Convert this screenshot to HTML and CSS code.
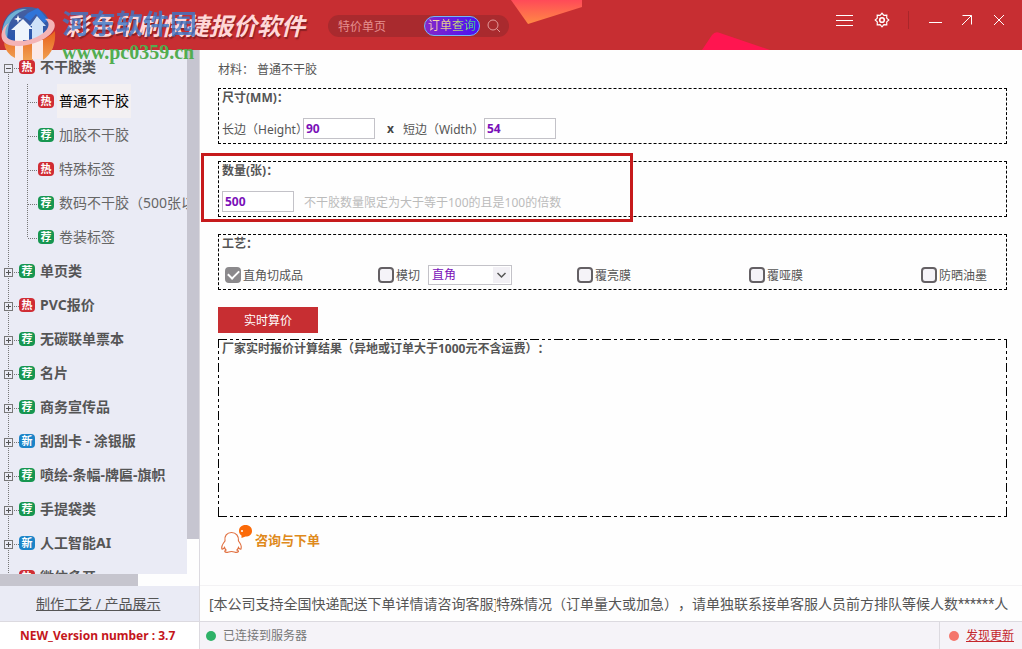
FILE: index.html
```html
<!DOCTYPE html>
<html lang="zh-CN">
<head>
  <meta charset="UTF-8">
  <meta name="viewport" content="width=device-width, initial-scale=1.0">
  <title>彩色印刷快捷报价软件</title>
  <link rel="stylesheet" href="styles.css">
</head>
<body>
  <header class="topbar">
    <svg class="shape shape-orange" width="71" height="24" viewBox="0 0 71 24" aria-hidden="true">
      <defs>
        <linearGradient id="orange" x1="0" y1="0" x2="0" y2="1">
          <stop offset="0" stop-color="#ff4a58"/>
          <stop offset="1" stop-color="#ff8a45"/>
        </linearGradient>
      </defs>
      <path d="M0 0H71V7L17 24Z" fill="url(#orange)"/>
    </svg>
    <svg class="shape shape-pink" width="68" height="18" viewBox="0 0 68 18" aria-hidden="true">
      <path d="M0 18L10 3Q13 -1 18 1L68 18Z" fill="#ff1550"/>
    </svg>

    <h1 class="title">彩色印刷快捷报价软件</h1>

    <form class="search">
      <input class="search-input" type="text" aria-label="搜索" placeholder="特价单页">
      <button class="order-btn" type="button"><span>订单查询</span></button>
      <button class="search-btn" type="submit" aria-label="搜索">
        <svg width="14" height="14" viewBox="0 0 14 14" fill="none" stroke="#e39a9a"><circle cx="6" cy="6" r="5"/><path d="M9.500 9.500L13 13"/></svg>
      </button>
    </form>

    <div class="window-tools">
      <button type="button" aria-label="菜单">
        <svg width="18" height="18" viewBox="0 0 18 18" stroke="#fff"><path d="M0 4.500H17M0 9.500H17M0 14.500H17"/></svg>
      </button>
      <button type="button" aria-label="设置">
        <svg width="16" height="16" viewBox="0 0 16 16" fill="none" stroke="#fff" stroke-width="1.200"><path d="M8 1.200L9.900 3.300L12.800 3.200L12.700 6.100L14.800 8L12.700 9.900L12.800 12.800L9.900 12.700L8 14.800L6.100 12.700L3.200 12.800L3.300 9.900L1.200 8L3.300 6.100L3.200 3.200L6.100 3.300Z"/><circle cx="8" cy="8" r="2.300" stroke-width="1.600"/></svg>
      </button>
      <span class="divider"></span>
      <button class="minimize" type="button" aria-label="最小化">
        <svg width="14" height="16" viewBox="0 0 14 16" stroke="#fff"><path d="M0 10.500H13"/></svg>
      </button>
      <button type="button" aria-label="最大化">
        <svg width="12" height="16" viewBox="0 0 12 16" fill="none" stroke="#fff"><path d="M1.500 3.500H10.500V12.500M10.500 3.500L1 13"/></svg>
      </button>
      <button type="button" aria-label="关闭">
        <svg width="12" height="16" viewBox="0 0 12 16" stroke="#fff"><path d="M1 3L11 13M11 3L1 13"/></svg>
      </button>
    </div>
  </header>

  <div class="middle">
    <aside class="sidebar">
      <div class="tree-area">
        <nav class="tree-view">
          <ul class="tree">
            <li>
              <div class="node"><span class="toggle open"></span><span class="badge hot">热</span><b>不干胶类</b></div>
              <ul class="children">
                <li class="node"><span class="badge hot">热</span><a class="selected" href="#">普通不干胶</a></li>
                <li class="node"><span class="badge rec">荐</span><a href="#">加胶不干胶</a></li>
                <li class="node"><span class="badge hot">热</span><a href="#">特殊标签</a></li>
                <li class="node"><span class="badge rec">荐</span><a href="#">数码不干胶（500张以</a></li>
                <li class="node"><span class="badge rec">荐</span><a href="#">卷装标签</a></li>
              </ul>
            </li>
            <li class="node"><span class="toggle"></span><span class="badge rec">荐</span><b>单页类</b></li>
            <li class="node"><span class="toggle"></span><span class="badge hot">热</span><b>PVC报价</b></li>
            <li class="node"><span class="toggle"></span><span class="badge rec">荐</span><b>无碳联单票本</b></li>
            <li class="node"><span class="toggle"></span><span class="badge rec">荐</span><b>名片</b></li>
            <li class="node"><span class="toggle"></span><span class="badge rec">荐</span><b>商务宣传品</b></li>
            <li class="node"><span class="toggle"></span><span class="badge new">新</span><b>刮刮卡 - 涂银版</b></li>
            <li class="node"><span class="toggle"></span><span class="badge rec">荐</span><b>喷绘-条幅-牌匾-旗帜</b></li>
            <li class="node"><span class="toggle"></span><span class="badge rec">荐</span><b>手提袋类</b></li>
            <li class="node"><span class="toggle"></span><span class="badge new">新</span><b>人工智能AI</b></li>
            <li class="node"><span class="toggle"></span><span class="badge hot">热</span><b>微信多开</b></li>
          </ul>
        </nav>
        <div class="scroll-v"></div>
        <div class="scroll-h"></div>
      </div>
      <div class="show-link"><a href="#">制作工艺 / 产品展示</a></div>
    </aside>

    <main class="main">
      <div class="content">
        <p class="material">材料： 普通不干胶</p>

        <section class="group">
          <h2>尺寸(MM)：</h2>
          <div class="row">
            <label class="size-label" for="height">长边（Height）</label>
            <input class="num" type="text" id="height" value="90">
            <b class="times">x</b>
            <label class="size-label" for="width">短边（Width）</label>
            <input class="num" type="text" id="width" value="54">
          </div>
        </section>

        <section class="group marked">
          <h2><label for="amount">数量(张)：</label></h2>
          <div class="row">
            <input class="num" type="text" id="amount" value="500">
            <span class="hint">不干胶数量限定为大于等于100的且是100的倍数</span>
          </div>
        </section>

        <section class="group">
          <h2>工艺：</h2>
          <div class="row crafts">
            <label class="check"><input type="checkbox" checked>直角切成品</label>
            <div class="die-cut">
              <label class="check"><input type="checkbox">模切</label>
              <span class="select-box">
                <select aria-label="模切形状"><option>直角</option></select>
                <svg width="17" height="16" viewBox="0 0 17 16" aria-hidden="true"><path d="M4.500 6L8.500 10L12.500 6" fill="none" stroke="#555" stroke-width="1.500"/></svg>
              </span>
            </div>
            <label class="check"><input type="checkbox">覆亮膜</label>
            <label class="check"><input type="checkbox">覆哑膜</label>
            <label class="check"><input type="checkbox">防晒油墨</label>
          </div>
        </section>

        <button class="calc-btn" type="button">实时算价</button>

        <section class="result">
          <h2>厂家实时报价计算结果（异地或订单大于1000元不含运费）：</h2>
        </section>

        <a class="contact" href="#">
          <svg width="34" height="30" viewBox="0 0 34 30" aria-hidden="true">
            <path d="M5 16C4 11 7 7.500 11.500 7.500S19 11 18.500 16C20.500 18.500 22 21.500 21 24C20 24.500 19 23.500 18.500 22.500C18 24 17.500 24.500 17 25C19.500 26 18.500 27.500 15.500 27.300C13.500 27.200 12.500 26.500 11.500 26.500S9.500 27.200 7.500 27.300C4.500 27.500 4 26 6 25C5.500 24.500 5 24 4.500 22.500C4 23.500 2.500 24.500 2 24C1 21.500 3 18.500 5 16Z" fill="#fff" stroke="#e07040" stroke-width="1.200"/>
            <path d="M25.500 0C29.500 0 32 2.500 32 6S29.500 11.500 25.500 11.500L21.500 13L21.500 10.500C19.500 9 19 7.500 19 6C19 2.500 21.500 0 25.500 0Z" fill="#fb6a08"/>
            <circle cx="22" cy="6" r="1" fill="#fff"/>
          </svg>
          <b>咨询与下单</b>
        </a>
      </div>

      <div class="notice"><span class="notice-lead">[本公司支持全国快递配送下单详情请咨询客服]</span><span>特殊情况（订单量大或加急），请单独联系接单客服人员前方排队等候人数<span class="stars">******</span>人</span></div>
    </main>
  </div>

  <footer class="statusbar">
    <b class="version">NEW_Version number : 3.7</b>
    <span class="server"><i class="dot green"></i>已连接到服务器</span>
    <span class="update"><i class="dot red"></i><a href="#">发现更新</a></span>
  </footer>

  <div class="watermark" aria-hidden="true">
    <svg width="58" height="56" viewBox="0 0 58 56">
      <defs>
        <linearGradient id="ball" x1="0" y1="0" x2="0" y2="1">
          <stop offset="0" stop-color="#4a5f9c"/>
          <stop offset="1" stop-color="#2456b0"/>
        </linearGradient>
        <linearGradient id="flame" x1="0" y1="0" x2="0" y2="1">
          <stop offset="0" stop-color="#e8601c"/>
          <stop offset="1" stop-color="#f0a050"/>
        </linearGradient>
      </defs>
      <path d="M2 26C2 11 13 1 28 1C40 1 48 8 50 18C46 30 30 38 10 36C5 35 2 31 2 26Z" fill="url(#ball)"/>
      <path d="M2 28C3 12 13 2 27 3C15 7 9 14 8 24L7 33C4 32 2 30 2 28Z" fill="#6fb0d4"/>
      <path d="M4 37C18 43 44 37 55 25C56 38 52 48 43 54V34L33 37V54H23V38L15 38V52C9 49 5 44 4 37Z" fill="url(#flame)"/>
      <path d="M15 34H23V54H15ZM32 34H43V53H32Z" fill="#fbe9e6"/>
      <path d="M11 24L23 13L33 23H29V34H15V24Z" fill="#eef5fc"/>
      <path d="M28 7L38 2L48 14L44 17L36 8L30 15L24 11Z" fill="#2f74d8"/>
      <path d="M30 20L37 10L46 20H43V32L32 34V20Z" fill="#cfe2f8"/>
      <path d="M9 17C-1 24 -1 36 9 39C23 43 49 35 54 23C57 16 51 12 45 13C51 17 49 23 42 28C32 35 17 37 9 33C4 30 4 23 9 17Z" fill="#f4b4b6"/>
      <path d="M18 9L19 12L22 13L19 14L18 17L17 14L14 13L17 12Z" fill="#fff"/>
    </svg>
    <div>
      <p class="mark-name">河东软件园</p>
      <p class="mark-site">www.pc0359.cn</p>
    </div>
  </div>
</body>
</html>
```
FILE: styles.css
```css
*,
*::before,
*::after {
  box-sizing: border-box;
}

body {
  margin: 0;
  min-height: 100vh;
  display: flex;
  flex-direction: column;
  position: relative;
  font-family: "Noto Sans", "Noto Sans CJK SC", sans-serif;
  font-size: 12px;
  color: #555;
  background: #fefefe;
  text-spacing-trim: space-all;
}

h1, h2, p, ul {
  margin: 0;
  padding: 0;
}

ul {
  list-style: none;
}

button, input, select {
  font: inherit;
  margin: 0;
}

button {
  padding: 0;
  border: none;
  background: none;
  cursor: pointer;
}

svg {
  display: block;
}

/* top bar */
.topbar {
  height: 50px;
  flex: none;
  display: flex;
  align-items: center;
  position: relative;
  padding: 2px 17px 0 65px;
  background: #c72e32;
}

.shape {
  position: absolute;
}

.shape-orange {
  left: 511px;
  top: 0;
}

.shape-pink {
  left: 702px;
  bottom: 0;
}

.title {
  width: 263px;
  font-size: 24px;
  line-height: 30px;
  font-style: italic;
  white-space: nowrap;
  color: #ffd8d8;
  text-shadow: 1px 2px 1px #8c2024;
}

.search {
  width: 181px;
  height: 22px;
  display: flex;
  align-items: center;
  gap: 7px;
  padding: 0 8px 0 10px;
  border-radius: 11px;
  background: #a92a2e;
}

.search-input {
  flex: 1;
  min-width: 0;
  padding: 0;
  border: none;
  outline: none;
  background: none;
  color: #e58f8f;
}

.search-input::placeholder {
  color: #e58f8f;
}

.order-btn {
  width: 56px;
  height: 20px;
  border: 1px solid #70b8f8;
  border-radius: 10px;
  background: linear-gradient(90deg, #8528c8, #4a10f4);
  line-height: 18px;
}

.order-btn span {
  background: linear-gradient(90deg, #ffd0c8, #e8e070, #30d090);
  background-clip: text;
  color: transparent;
}

.window-tools {
  display: flex;
  align-items: center;
  gap: 20px;
  margin-left: auto;
  padding-bottom: 12px;
}

.window-tools button:nth-child(2) {
  margin-right: -2px;
}

.window-tools .minimize {
  margin-right: -2px;
}

.divider {
  width: 1px;
  height: 18px;
  background: #a9262a;
}

/* middle part */
.middle {
  flex: 1;
  display: flex;
  min-height: 0;
}

.sidebar {
  width: 200px;
  flex: none;
  display: flex;
  flex-direction: column;
  border-right: 1px solid #dcdae0;
}

.tree-area {
  flex: 1;
  display: grid;
  grid-template-columns: 1fr 12px;
  grid-template-rows: 1fr 12px;
}

.tree-view {
  height: calc(100vh - 125px);
  overflow: hidden;
  background: #eaebf5;
}

.scroll-v {
  background: linear-gradient(#c6c5d0, #c6c5d0) no-repeat 0 0 / 100% calc(100% - 35px);
}

.scroll-h {
  grid-column: 1 / 3;
  background: linear-gradient(#c6c5ce, #c6c5ce) no-repeat 0 0 / 138px 100%;
}

.tree {
  font-size: 14px;
  white-space: nowrap;
  background: repeating-linear-gradient(#777 0 1px, transparent 1px 2px) no-repeat 8px 18px / 1px 100%;
}

.node {
  height: 34px;
  display: flex;
  align-items: center;
  padding-left: 4px;
}

.toggle {
  width: 9px;
  height: 9px;
  flex: none;
  margin-top: 2px;
  border: 1px solid #777;
  background:
    linear-gradient(#555, #555) no-repeat center / 5px 1px,
    linear-gradient(#555, #555) no-repeat center / 1px 5px,
    #eaebf5;
}

.toggle.open {
  background: linear-gradient(#555, #555) no-repeat center / 5px 1px, #eaebf5;
}

/* dotted lead line in front of the badge */
.toggle + .badge::before,
.children .badge::before {
  content: "";
  position: absolute;
  top: 8px;
  right: 100%;
  width: 5px;
  height: 1px;
  background: repeating-linear-gradient(90deg, #777 0 1px, transparent 1px 2px);
}

.children .badge::before {
  width: 10px;
}

.children {
  background: repeating-linear-gradient(#777 0 1px, transparent 1px 2px) no-repeat 27px 0 / 1px calc(100% - 16px);
}

.children .node {
  padding-left: 38px;
}

.badge {
  position: relative;
  width: 16px;
  height: 14px;
  flex: none;
  border-radius: 4px;
  font-size: 11px;
  font-weight: bold;
  line-height: 14px;
  text-align: center;
  color: #fff;
}

.toggle + .badge {
  margin-left: 6px;
}

.badge + b {
  margin-left: 5px;
  padding-bottom: 2px;
}

.hot {
  background: #d02c34;
}

.rec {
  background: #179650;
}

.new {
  background: #1c84c8;
}

.children a {
  margin-left: 3px;
  padding: 0 2px;
  line-height: 34px;
  color: #666;
  text-decoration: none;
}

.children a.selected {
  color: #000;
  background: #f3f0f2;
}

.show-link {
  height: 35px;
  padding-left: 36px;
  font-size: 14px;
  line-height: 35px;
  background: #eaebf5;
}

.show-link a {
  color: #555;
}

/* quote form */
.main {
  flex: 1;
  min-width: 0;
  display: flex;
  flex-direction: column;
}

.content {
  flex: 1;
  display: flex;
  flex-direction: column;
  align-items: stretch;
  padding: 10px 15px 30px 18px;
}

.material {
  margin-bottom: 8px;
  line-height: 20px;
}

.group {
  height: 56px;
  margin-bottom: 17px;
  padding: 0 3px;
  border: 1px dashed #000;
}

h2 {
  font-size: 12px;
  line-height: 17px;
}

.row {
  height: 21px;
  display: flex;
  align-items: center;
  margin-top: 12px;
}

.size-label {
  width: 81px;
  overflow: hidden;
  white-space: nowrap;
}

.num {
  width: 72px;
  height: 21px;
  padding: 0 2px;
  border: 1px solid #c3c2c8;
  background: #fff;
  font-weight: bold;
  color: #7a10b8;
}

.times {
  margin: 0 9px 0 12px;
  color: #444;
}

.marked {
  position: relative;
}

/* red frame round the amount field */
.marked::after {
  content: "";
  position: absolute;
  left: -18px;
  top: -9px;
  width: 432px;
  height: 69px;
  border: 3px solid #c61a1c;
  pointer-events: none;
}

.hint {
  margin-left: 10px;
  color: #bbb;
}

.crafts {
  display: grid;
  grid-template-columns: 153fr 199fr 172fr 172fr 82fr;
  padding-left: 3px;
  white-space: nowrap;
}

.check {
  display: flex;
  align-items: center;
  gap: 2px;
}

.check input {
  appearance: none;
  width: 16px;
  height: 16px;
  flex: none;
  border: 2px solid #646064;
  border-radius: 4px;
  background: #f5f3f8;
}

.check input:checked {
  border-color: #8b898c;
  background: #8b898c;
}

.check input:checked::before {
  content: "";
  display: block;
  width: 11px;
  height: 7px;
  margin: 1px 0 0 1px;
  border: solid #fff;
  border-width: 0 0 2px 2px;
  transform: rotate(-45deg);
}

.die-cut {
  display: flex;
  align-items: center;
  gap: 8px;
}

.select-box {
  position: relative;
}

.select-box select {
  appearance: none;
  display: block;
  width: 84px;
  height: 20px;
  padding: 0 3px;
  border: 1px solid #c3c2c8;
  border-radius: 0;
  background: #fff;
  color: #7a10b8;
}

.select-box svg {
  position: absolute;
  right: 2px;
  top: 2px;
  background: #f2f0f5;
  pointer-events: none;
}

.calc-btn {
  align-self: flex-start;
  width: 100px;
  height: 26px;
  margin-bottom: 6px;
  background: #c72e32;
  color: #fff;
}

/* dash-dot-dot frame, drawn side by side */
.result {
  --h: repeating-linear-gradient(90deg, #000 0 9px, transparent 9px 12px, #000 12px 15px, transparent 15px 18px, #000 18px 21px, transparent 21px 24px);
  --v: repeating-linear-gradient(#000 0 9px, transparent 9px 12px, #000 12px 15px, transparent 15px 18px, #000 18px 21px, transparent 21px 24px);
  flex: 1;
  padding: 1px 4px;
  background:
    var(--h) no-repeat left top / 100% 1px,
    var(--h) no-repeat left bottom / 100% 1px,
    var(--v) no-repeat left top / 1px 100%,
    var(--v) no-repeat right top / 1px 100%;
}

.contact {
  align-self: flex-start;
  display: flex;
  align-items: center;
  gap: 1px;
  margin-top: 8px;
  padding-left: 2px;
  font-size: 13px;
  line-height: 28px;
  color: #df8a1c;
  text-decoration: none;
}

.notice {
  height: 36px;
  display: flex;
  padding-left: 9px;
  border-top: 1px solid #f3f2f4;
  font-size: 14px;
  line-height: 36px;
  white-space: nowrap;
  overflow: hidden;
}

.notice-lead {
  width: 287px;
  flex: none;
  overflow: hidden;
}

.stars {
  font-family: Roboto, sans-serif;
}

/* status bar */
.statusbar {
  height: 28px;
  flex: none;
  display: flex;
  line-height: 28px;
  border-top: 1px solid #dcdae0;
  background: #f5f3f8;
}

.version {
  width: 200px;
  padding-left: 20px;
  border-right: 1px solid #dcdae0;
  background: #fff;
  color: #c4161c;
}

.server {
  flex: 1;
  display: flex;
  align-items: center;
  gap: 7px;
  padding-left: 6px;
  color: #777;
}

.update {
  display: flex;
  align-items: center;
  gap: 7px;
  padding: 0 8px 0 9px;
  border-left: 1px solid #dcdae0;
}

.update a {
  color: #c4262c;
}

.dot {
  width: 10px;
  height: 10px;
  border-radius: 50%;
}

.green {
  background: #2fb268;
}

.red {
  background: #f4766c;
}

/* site mark over the corner */
.watermark {
  position: absolute;
  left: 0;
  top: 6px;
  display: flex;
  gap: 4px;
  pointer-events: none;
}

.mark-name {
  font-size: 27px;
  font-weight: bold;
  line-height: 36px;
  color: #3c78c8;
  opacity: 0.8;
}

.mark-site {
  font-family: "Liberation Serif", serif;
  font-size: 20px;
  font-weight: bold;
  line-height: 20px;
  color: #52ad50;
}
```
